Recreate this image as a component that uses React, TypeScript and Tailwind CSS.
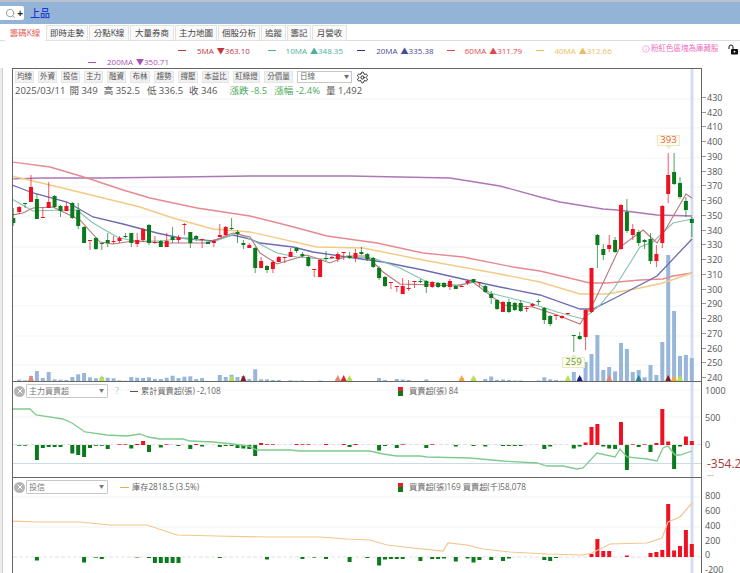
import { Search, Settings, X, Info } from 'lucide-react';

const ui = '"Open Sans", "Noto Sans CJK TC", sans-serif';

// x of candle i
const cx = (i: number) => 13.3 + 5.9 * i;

// [red?, wickTop, bodyTop, bodyBottom, wickBottom] in page pixels
const candles: number[][] = [
  [0, 208, 218, 223, 226], [1, 206, 207, 212, 214], [0, 203, 203, 204, 208], [1, 175, 187, 202, 202], [0, 194, 199, 219, 219],
  [1, 208, 217, 218, 218], [1, 182, 202, 208, 208], [0, 195, 196, 207, 208], [0, 205, 206, 211, 217], [1, 202, 206, 211, 211],
  [0, 202, 203, 218, 219], [0, 203, 210, 226, 229], [0, 226, 227, 243, 243], [1, 240, 240, 241, 250], [0, 237, 238, 249, 250],
  [0, 243, 243, 244, 250], [0, 233, 240, 243, 247], [1, 236, 241, 242, 244], [1, 236, 238, 241, 243], [0, 233, 236, 237, 238],
  [0, 233, 233, 243, 247], [1, 233, 240, 244, 247], [1, 228, 229, 240, 242], [0, 224, 225, 243, 245], [1, 236, 242, 243, 244],
  [0, 240, 241, 247, 247], [1, 233, 241, 247, 247], [0, 227, 237, 240, 243], [1, 235, 237, 240, 243], [1, 223, 224, 225, 235],
  [0, 232, 232, 243, 248], [0, 235, 236, 239, 241], [1, 239, 239, 240, 248], [0, 242, 242, 244, 244], [1, 239, 241, 243, 247],
  [1, 224, 235, 237, 237], [1, 226, 227, 235, 236], [0, 218, 228, 229, 230], [0, 230, 232, 234, 243], [0, 240, 243, 245, 249],
  [1, 243, 245, 248, 248], [0, 247, 248, 268, 273], [1, 257, 261, 268, 268], [0, 265, 266, 270, 273], [1, 260, 262, 269, 273],
  [1, 256, 257, 262, 262], [1, 257, 257, 258, 263], [1, 248, 252, 257, 257], [0, 247, 248, 251, 253], [0, 252, 254, 256, 257],
  [0, 256, 257, 266, 267], [1, 269, 269, 270, 277], [1, 259, 260, 277, 277], [0, 251, 258, 259, 261], [1, 256, 257, 258, 259],
  [1, 252, 254, 259, 262], [1, 252, 252, 253, 260], [0, 252, 256, 258, 259], [1, 249, 253, 258, 262], [0, 247, 252, 254, 255],
  [0, 253, 254, 259, 261], [0, 257, 258, 267, 268], [0, 266, 268, 278, 280], [0, 276, 277, 286, 287], [1, 282, 282, 283, 289],
  [1, 286, 286, 287, 292], [1, 278, 286, 294, 294], [1, 280, 288, 289, 291], [1, 281, 281, 282, 288], [0, 279, 281, 282, 283],
  [0, 280, 281, 287, 293], [1, 281, 282, 287, 288], [0, 282, 283, 287, 288], [0, 282, 283, 287, 288], [1, 279, 281, 287, 290],
  [0, 285, 286, 289, 289], [1, 285, 286, 287, 287], [1, 280, 281, 283, 285], [0, 279, 279, 282, 283], [1, 282, 282, 283, 287],
  [0, 285, 286, 292, 293], [0, 291, 294, 298, 304], [0, 299, 300, 309, 310], [1, 301, 302, 312, 312], [0, 299, 302, 312, 313],
  [0, 302, 303, 310, 311], [0, 300, 303, 311, 312], [1, 307, 308, 309, 312], [1, 303, 304, 306, 307], [0, 299, 301, 302, 305],
  [0, 307, 308, 320, 324], [0, 315, 316, 324, 326], [1, 315, 315, 316, 320], [1, 315, 316, 318, 319], [1, 313, 313, 314, 315],
  [0, 335, 335, 336, 352], [0, 332, 336, 339, 340], [1, 309, 310, 337, 350], [1, 268, 268, 312, 313], [0, 234, 235, 245, 268],
  [0, 244, 249, 255, 260], [1, 235, 245, 249, 252], [0, 237, 240, 252, 253], [1, 204, 205, 249, 250], [0, 199, 212, 231, 233],
  [1, 224, 229, 235, 240], [0, 230, 232, 243, 246], [0, 239, 240, 242, 249], [0, 233, 239, 261, 264], [1, 245, 254, 261, 267],
  [1, 205, 206, 243, 248], [1, 153, 175, 194, 203], [0, 153, 172, 184, 185], [0, 177, 183, 197, 199], [0, 197, 201, 210, 217],
  [0, 217, 219, 223, 237],
];

const volumes = [
  1, 2.3, 1.7, 6, 11, 4, 10, 2.7, 2.3, 2,
  5, 7.7, 9, 4.7, 3.7, 5, 4.3, 3.7, 1.7, 1.3,
  5, 4.3, 4, 4.7, 3, 3, 4.3, 6.3, 4, 5.3,
  5.7, 3, 4, 0.7, 0.4, 7, 5, 7.3, 5, 6,
  3, 12.7, 2.7, 2.7, 2, 2, 0.5, 1.7, 1.3, 1.5,
  1, 1, 1.5, 0.5, 0.5, 3, 3, 3, 1, 1,
  1, 1, 4, 2, 1, 3, 2.5, 2, 1, 1,
  2.5, 1, 1, 1, 1, 1, 4, 1, 4, 1,
  3, 5.5, 2, 2.5, 2, 1.5, 1.5, 1, 1, 1.5,
  4.7, 2.7, 2, 1.3, 3, 10, 5, 20, 28, 47,
  12, 15, 10.7, 39, 33, 10, 12, 4.7, 17, 7,
  40, 127, 71, 26, 27, 24,
];

const markers: [number, string][] = [
  [3, '#f08070'], [15, '#b4e34a'], [37, '#b4e34a'], [39, '#8b1a1a'], [55, '#f08070'], [56, '#e2232a'],
  [57, '#b4e34a'], [76, '#f5a83a'], [78, '#b4e34a'], [94, '#b4e34a'], [96, '#1a1a80'], [101, '#f08070'],
  [106, '#1a8a9a'], [111, '#8b1a1a'], [112, '#f5a83a'], [113, '#b4e34a'],
];

const ma200 = '12,179 40,178 100,178 180,177 250,176 350,176 400,177 450,178 500,186 540,197 560,202 603,209 617,210 657,215 692,216';
const ma60 = '12,162 50,167 67,172 87,178 123,190 150,198 197,208 250,216 290,226 327,236 377,243 423,253 463,257 513,267 540,271 590,283 607,283 640,280 663,279 673,276 692,273';
const ma40 = '12,176 50,185 83,193 140,207 173,218 213,229 250,232 317,247 363,248 423,260 500,274 540,282 580,294 607,294 640,288 663,283 692,273';
const ma20 = '12,185 33,193 67,202 93,217 123,224 157,233 180,238 213,241 233,235 250,239 260,243 293,247 313,252 347,257 383,262 423,270 467,280 500,287 540,295 580,309 593,309 617,297 657,276 692,239';
const ma10 = '12,199 33,211 60,210 77,210 93,223 117,237 133,241 160,241 187,238 213,242 237,233 250,239 277,253 297,257 323,259 350,257 373,258 400,268 427,282 457,285 477,282 490,293 530,303 557,312 583,319 600,305 615,287 640,247 653,242 673,223 692,219';
const ma5 = '12,215 23,213 33,208 53,207 80,220 100,242 113,244 133,241 167,243 207,243 233,233 250,237 260,253 277,264 290,260 307,255 330,263 347,256 367,256 383,272 400,284 433,285 457,286 473,282 503,305 533,307 557,315 580,324 595,300 620,247 643,230 657,243 667,227 686,194 692,198';

const mainBars: Record<number, number> = {
  1: -0.8, 2: -0.8, 4: -15, 5: -3, 6: -2, 7: -2, 8: -2, 10: -8.5, 11: -10, 12: -12, 13: -3, 14: -0.8, 15: -0.8, 16: -4, 18: 0.7, 19: 0.7,
  20: -3.5, 21: 1, 22: 4, 23: -7, 25: -2.5, 26: 0.7, 28: -1, 30: -4, 31: 1, 32: -1.5, 35: -2, 36: -1, 37: -1, 38: -3, 39: -3.5, 40: -4,
  41: -11, 42: 2, 43: 0.7, 44: 0.7, 48: 1, 49: 0.7, 50: 0.7, 53: 1, 56: 1, 57: -2, 58: 1, 62: -5.5, 63: -1, 65: -3, 66: 0.7, 70: -3, 71: 0.7,
  75: -1.5, 78: -1, 80: -1.5, 83: -1, 84: -1, 85: -1, 86: -1, 90: -4, 91: -1.5, 95: -3.5, 96: -1.5, 97: 2.5, 98: 18, 99: 21, 100: -1.5,
  101: -3.5, 102: -4, 103: 23, 104: -25, 105: 0.7, 106: -2, 107: 0.7, 108: -7, 109: 2, 110: 36, 111: 3.5, 112: -24, 113: -1.5, 114: 8.5, 115: 4,
};

const trustBars: Record<number, number> = {
  4: -3.5, 12: -5.5, 14: -0.7, 15: -2, 21: -0.5, 23: -1, 24: -6, 25: -6, 26: -6, 27: -6, 28: -6, 35: -1, 43: -2.5, 49: -2, 51: -0.6, 53: -2,
  57: -5, 60: -1, 62: -8.5, 63: -2.5, 64: -2, 65: -2, 66: -2, 69: -4, 71: -2, 72: -2, 73: -1.5, 75: -4.5, 77: -1.5, 78: -5.5, 79: -3,
  81: -3, 83: -4, 84: -1.5, 90: -3, 91: -4, 92: -1, 98: 3, 99: 18, 100: 6, 101: 6, 104: 1.5, 108: 4, 109: 5, 110: 7, 111: 53, 112: 6.5,
  113: 11, 114: 27, 115: 13,
};

const chipLine = '12,409 30,409 36,415 63,419 72,423 85,432 107,435 127,436 140,434 148,437 160,439 183,439 190,441 213,442 233,444 248,446 257,450 290,450 300,451 340,451 370,451 383,454 397,456 420,456 427,457 470,458 503,461 537,463 547,466 563,466 577,469 583,468 597,453 615,457 620,449 627,457 647,459 657,461 663,448 668,446 675,455 680,455 692,451';
const stockLine = '12,521 37,522 80,522 110,525 147,525 177,535 217,536 267,537 320,537 347,539 370,540 387,545 413,548 443,551 448,543 467,545 483,549 510,552 547,554 583,555 592,553 610,544 647,543 662,538 668,522 680,517 692,503';

const tabs = [
  { label: '籌碼K線', w: 'w-[40px]', active: true },
  { label: '即時走勢', w: 'w-[42px]' },
  { label: '分點K線', w: 'w-[40px]' },
  { label: '大量券商', w: 'w-[44px]' },
  { label: '主力地圖', w: 'w-[42px]' },
  { label: '個股分析', w: 'w-[42px]' },
  { label: '追蹤', w: 'w-[25px]' },
  { label: '籌記', w: 'w-[24px]' },
  { label: '月營收', w: 'w-[35px]' },
];

const tools = [
  ['均線', 'w-[19px]'], ['外資', 'w-[19px]'], ['投信', 'w-[19px]'], ['主力', 'w-[19px]'], ['融資', 'w-[19px]'], ['布林', 'w-[20px]'],
  ['趨勢', 'w-[20px]'], ['撐壓', 'w-[20px]'], ['本益比', 'w-[27px]'], ['紅綠燈', 'w-[27px]'], ['分價量', 'w-[29px]'],
];

const legend1 = [
  { name: '5MA', arrow: '▼', value: '363.10', line: 'bg-[#c0343c]', text: 'text-[#c0343c]', gap: 'ml-[11px]' },
  { name: '10MA', arrow: '▲', value: '348.35', line: 'bg-[#4caf9c]', text: 'text-[#4caf9c]', gap: 'ml-[10px]' },
  { name: '20MA', arrow: '▲', value: '335.38', line: 'bg-[#33337f]', text: 'text-[#4a4a94]', gap: 'ml-[11px]' },
  { name: '60MA', arrow: '▲', value: '311.79', line: 'bg-[#e0474c]', text: 'text-[#e0474c]', gap: 'ml-[10px]' },
  { name: '40MA', arrow: '▲', value: '312.66', line: 'bg-[#eebc60]', text: 'text-[#eebc60]', gap: 'ml-[10px]' },
];

function Bars({ data, zero }: { data: Record<number, number>; zero: number }) {
  return (
    <>
      {Object.entries(data).map(([k, v]) => (
        <rect
          key={k}
          x={cx(Number(k)) - 2}
          y={v > 0 ? zero - v : zero}
          width={4}
          height={Math.abs(v)}
          fill={v > 0 ? '#ee1122' : '#0b7a1d'}
        />
      ))}
    </>
  );
}

function MainChart() {
  return (
    <svg className="absolute inset-0 block" width={688} height={312} viewBox="13 69 688 312">
      {[128, 158, 187, 217, 247, 276, 306, 336, 365, 99].map(y => (
        <line key={y} x1={13} x2={701} y1={y} y2={y} stroke="#f3f3f3" />
      ))}
      <rect x={690.5} y={69} width={3} height={312} fill="#d3dfef" />
      {volumes.map((h, i) => (
        <rect key={i} x={cx(i) - 2} y={382 - h} width={4} height={h} fill="#97b6d9" />
      ))}
      {markers.map(([i, c]) => (
        <polygon key={i} points={`${cx(i) - 3.5},382 ${cx(i)},375 ${cx(i) + 3.5},382`} fill={c} />
      ))}
      <polyline points={ma200} fill="none" stroke="#ad76b5" strokeWidth={1.3} />
      <polyline points={ma60} fill="none" stroke="#e68a90" strokeWidth={1.4} />
      <polyline points={ma40} fill="none" stroke="#f3ca86" strokeWidth={1.4} />
      <polyline points={ma20} fill="none" stroke="#6c6cb0" strokeWidth={1.3} />
      <polyline points={ma10} fill="none" stroke="#82c2b2" strokeWidth={1.1} />
      <polyline points={ma5} fill="none" stroke="#b8767a" strokeWidth={1.1} />
      {candles.map(([red, wt, bt, bb, wb], i) => (
        <g key={i} fill={red ? '#ee1122' : '#0b7a1d'}>
          <rect x={cx(i) - 0.5} y={wt} width={1} height={wb - wt} opacity={0.7} />
          <rect x={cx(i) - 2} y={bt} width={4} height={bb - bt} />
        </g>
      ))}
    </svg>
  );
}

function Badge({ value, color, pos, up }: { value: string; color: string; pos: string; up?: boolean }) {
  return (
    <div className={`absolute ${pos} flex h-[11px] w-[23px] items-center justify-center border border-[#ece8c4] bg-[#fffdea] text-[9.5px] ${color}`}>
      {value}
      <span
        className={
          up
            ? 'absolute -top-[4px] left-[8px] h-0 w-0 border-x-[3px] border-b-[3px] border-x-transparent border-b-[#ece8c4]'
            : 'absolute -bottom-[4px] left-[8px] h-0 w-0 border-x-[3px] border-t-[3px] border-x-transparent border-t-[#ece8c4]'
        }
      />
    </div>
  );
}

function PanelSelect({ label }: { label: string }) {
  return (
    <div className="flex items-center gap-[1px]">
      <span className="flex h-[11px] w-[11px] items-center justify-center rounded-full bg-[#b4b4b4]">
        <X size={8} color="#fff" strokeWidth={3} />
      </span>
      <div className="flex h-[14px] w-[82px] items-center justify-between rounded-[1px] border border-[#c8c8c8] bg-white pl-[2px] pr-[3px] text-[8px] text-[#777]">
        {label}
        <span className="text-[5px] text-[#777]">▼</span>
      </div>
    </div>
  );
}

function RedGreen() {
  return (
    <span className="mr-[6px] flex h-[9px] w-[5px] flex-col">
      <span className="h-1/2 bg-[#e2232a]" />
      <span className="h-1/2 bg-[#0b7a1d]" />
    </span>
  );
}

function AxisLabel({ value }: { value: string }) {
  return (
    <div className="flex h-[14.75px] items-center">
      <span className="mr-[1px] h-px w-[4px] bg-[#999]" />
      {value}
    </div>
  );
}

export default function App() {
  return (
    <div
      className="relative flex h-[573px] w-[740px] flex-col overflow-hidden bg-white text-[#444]"
      style={{ fontFamily: ui }}
    >
      {/* top bar */}
      <div className="flex h-[24px] items-center border-t-2 border-[#b9c1d0] bg-[#93b3d7]">
        <div className="flex h-[14px] w-[24px] items-center justify-end gap-[1px] rounded-r-[2px] bg-white pr-[1px]">
          <Search size={11} color="#8a98a6" strokeWidth={2} />
          <span className="text-[10px] font-bold leading-none text-[#222]">+</span>
        </div>
        <span className="ml-[6px] text-[10px] font-medium text-[#1c34d2]">上品</span>
      </div>

      {/* tabs */}
      <div className="mt-[1px] flex h-[16px] gap-[1px] border-b border-[#dcdcdc] pl-[5px]">
        {tabs.map(t => (
          <div
            key={t.label}
            className={`flex h-[16px] ${t.w} items-center justify-center text-[8.5px] ${
              t.active ? 'bg-white text-[#e0605a]' : 'border border-[#e2e2e2] bg-[#fafafa] text-[#444]'
            }`}
          >
            {t.label}
          </div>
        ))}
      </div>

      {/* moving average legend */}
      <div className="relative h-[27px] text-[8px] leading-none">
        <div className="flex h-[19px] items-center pl-[178px]">
          {legend1.map(m => (
            <div key={m.name} className={`flex w-[89.6px] items-center ${m.text}`}>
              <span className={`h-px w-[8px] ${m.line}`} />
              <span className={m.gap}>{m.name}</span>
              <span className="ml-[3px]">{m.arrow}</span>
              <span>{m.value}</span>
            </div>
          ))}
        </div>
        <div className="-mt-[1px] flex h-[6px] items-center pl-[88px] text-[#a84fb0]">
          <span className="h-px w-[8px] bg-[#a84fb0]" />
          <span className="ml-[11px]">200MA</span>
          <span className="ml-[3px]">▼</span>
          <span>350.71</span>
        </div>
        <div className="absolute left-[642px] top-[4px] flex items-center gap-[1px] text-[7.5px] text-[#ee6fc0]">
          <Info size={8} strokeWidth={1.5} />
          粉紅色區塊為庫藏股
        </div>
        <svg className="absolute left-[728px] top-[3px]" width={11} height={11} viewBox="0 0 11 11">
          <path d="M1 5V3a2 2 0 0 1 4 0v2" fill="none" stroke="#111" strokeWidth={1} />
          <rect x={3} y={5} width={7} height={5.5} rx={0.8} fill="#111" />
          <circle cx={6.5} cy={7.7} r={0.9} fill="#fff" />
        </svg>
      </div>

      {/* chart body */}
      <div className="flex">
        <div className="w-[3px] border-r border-[#cfcfcf] bg-[#ececec]" />
        <div className="ml-[9px] flex w-[690px] flex-col">
          {/* price panel */}
          <div className="relative h-[313px] border border-b-0 border-[#666]">
            <MainChart />
            <div className="absolute left-[2px] top-[2px] flex h-[12px] items-center gap-[4px]">
              {tools.map(([label, w]) => (
                <div
                  key={label}
                  className={`flex h-[12px] ${w} items-center justify-center border border-[#e6e6e6] bg-[#f1f1f1] text-[7.5px] text-[#555]`}
                >
                  {label}
                </div>
              ))}
              <div className="flex h-[12px] w-[55px] items-center justify-between border border-[#c8c8c8] bg-white pl-[2px] pr-[2px] text-[7.5px] text-[#666]">
                日線
                <span className="text-[5px]">▼</span>
              </div>
              <Settings size={13} color="#222" strokeWidth={1.8} />
            </div>
            <div className="absolute left-[2px] top-[15px] flex h-[14px] items-center whitespace-nowrap text-[9.5px] text-[#555]">
              <span>2025/03/11</span>
              <span className="ml-[4px]">開 349</span>
              <span className="ml-[6px]">高 352.5</span>
              <span className="ml-[7px]">低 336.5</span>
              <span className="ml-[6px]">收 346</span>
              <span className="ml-[12px] text-[#4faa5a]">漲跌 -8.5</span>
              <span className="ml-[7px] text-[#4faa5a]">漲幅 -2.4%</span>
              <span className="ml-[6px]">量 1,492</span>
            </div>
            <Badge value="393" color="text-[#e0604a]" pos="left-[644px] top-[66px]" />
            <Badge value="259" color="text-[#5a9a3a]" pos="left-[549px] top-[288px]" up />
          </div>

          {/* main force panel */}
          <div className="relative h-[96px] border border-b-0 border-[#666]">
            <svg className="absolute inset-0 block" width={688} height={95} viewBox="13 382 688 95">
              <line x1={13} x2={701} y1={390} y2={390} stroke="#f3f3f3" />
              <line x1={13} x2={701} y1={417} y2={417} stroke="#f3f3f3" />
              <rect x={690.5} y={382} width={3} height={95} fill="#d3dfef" />
              <line x1={13} x2={701} y1={463.5} y2={463.5} stroke="#c9dbe9" />
              <line x1={13} x2={701} y1={444.5} y2={444.5} stroke="#e9dede" strokeDasharray="4 2" />
              <Bars data={mainBars} zero={445} />
              <polyline points={chipLine} fill="none" stroke="#7fcb8f" strokeWidth={1.3} />
            </svg>
            <div className="absolute left-0 top-[2px] flex h-[14px] items-center whitespace-nowrap pl-[1px] text-[8.2px] text-[#666]">
              <PanelSelect label="主力買賣超" />
              <span className="ml-[7px] w-[5px] text-[9px] text-[#a8c4dc]">?</span>
              <span className="ml-[10px] h-px w-[8px] bg-[#555]" />
              <span className="ml-[3px] w-[81px]">累計買賣超(張) -2,108</span>
              <span className="ml-[176px]"><RedGreen /></span>
              <span>買賣超(張) 84</span>
            </div>
          </div>

          {/* investment trust panel */}
          <div className="relative h-[96px] border border-b-0 border-[#666]">
            <svg className="absolute inset-0 block" width={688} height={95} viewBox="13 478 688 95">
              <line x1={13} x2={701} y1={497} y2={497} stroke="#f3f3f3" />
              <line x1={13} x2={701} y1={527} y2={527} stroke="#f3f3f3" />
              <rect x={690.5} y={478} width={3} height={95} fill="#d3dfef" />
              <line x1={13} x2={701} y1={557} y2={557} stroke="#e9dede" strokeDasharray="4 2" />
              <Bars data={trustBars} zero={557} />
              <polyline points={stockLine} fill="none" stroke="#f3c58c" strokeWidth={1.2} />
            </svg>
            <div className="absolute left-0 top-[2px] flex h-[14px] items-center whitespace-nowrap pl-[1px] text-[8.2px] text-[#666]">
              <PanelSelect label="投信" />
              <span className="ml-[12px] h-px w-[9px] bg-[#f0a858]" />
              <span className="ml-[3px] w-[68px]">庫存2818.5 (3.5%)</span>
              <span className="ml-[198px]"><RedGreen /></span>
              <span>買賣超(張)169 買賣超(千)58,078</span>
            </div>
          </div>
        </div>

        {/* axis column */}
        <div className="w-[38px] text-[9px] leading-none text-[#555]">
          <div className="h-[313px] pt-[22px]">
            {['430', '420', '410', '400', '390', '380', '370', '360', '350', '340', '330', '320', '310', '300', '290', '280', '270', '260', '250', '240'].map(v => (
              <AxisLabel key={v} value={v} />
            ))}
          </div>
          <div className="flex h-[96px] flex-col pl-[3px] pt-[3px]">
            <span className="flex h-[12px] items-center">1000</span>
            <span className="mt-[15px] flex h-[12px] items-center">500</span>
            <span className="mt-[15px] flex h-[12px] items-center">0</span>
            <span className="ml-[2px] mt-[7px] flex h-[13px] items-center text-[12px] text-[#a83a3a]">-354.2</span>
            <span className="ml-[2px] mt-[1px] flex h-[6px] items-center text-[7px] text-[#888]">---</span>
          </div>
          <div className="h-[96px] pl-[3px] pt-[11.5px]">
            {['800', '600', '400', '200', '0', '-200'].map(v => (
              <div key={v} className="flex h-[14.75px] items-center">{v}</div>
            ))}
          </div>
        </div>
      </div>
    </div>
  );
}
